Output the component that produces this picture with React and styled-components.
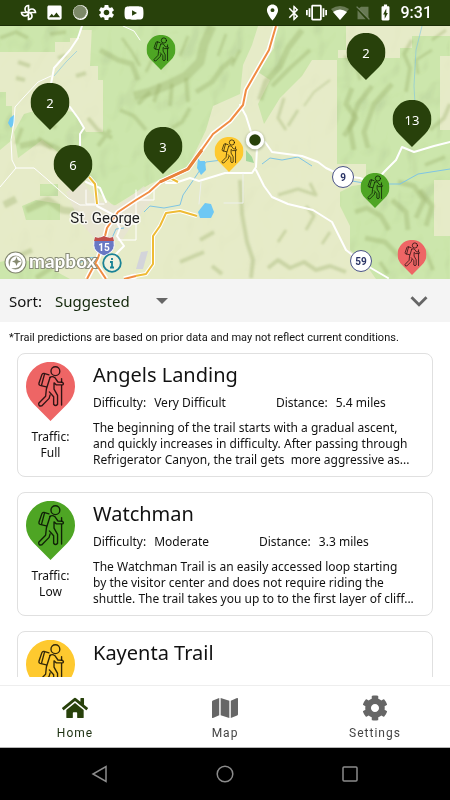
import React, { useState } from 'react'
import styled, { createGlobalStyle } from 'styled-components'
import { FaHome, FaMap, FaCog, FaYoutube } from 'react-icons/fa'
import {
    MdImage,
    MdSettings,
    MdLocationOn,
    MdBluetooth,
    MdVibration,
    MdBatteryChargingFull,
    MdExpandMore,
} from 'react-icons/md'

const colors = {
    forest: '#28410b',
    full: '#ee6565',
    low: '#4ea524',
    medium: '#fec92f',
    icon: '#666666',
}

const GlobalStyle = createGlobalStyle`
    * {
        box-sizing: border-box;
    }
    body {
        margin: 0;
        background: white;
        color: #111111;
        font-family: 'Noto Sans', sans-serif;
    }
    button {
        padding: 0;
        border: none;
        background: none;
        font: inherit;
        color: inherit;
        cursor: pointer;
    }
    svg {
        display: block;
    }
`

const Screen = styled.div`
    display: flex;
    flex-direction: column;
    height: 100vh;
    overflow: hidden;
`

const StatusBar = styled.header`
    display: flex;
    flex: none;
    align-items: center;
    justify-content: space-between;
    height: 26px;
    padding: 0 18px 0 20px;
    border-bottom: 1px solid #1c2e07;
    background: ${colors.forest};
    color: white;
`

const StatusGroup = styled.div`
    display: flex;
    align-items: center;
    gap: ${props => props.$gap}px;
`

const Clock = styled.time`
    margin-left: 3px;
    font-family: Roboto, sans-serif;
    font-size: 16px;
    font-weight: 500;
    line-height: 20px;
`

const MapArea = styled.section`
    position: relative;
    flex: none;
    width: 100%;
    aspect-ratio: 450 / 253;
    overflow: hidden;
`

const MapCanvas = styled.svg`
    width: 100%;
    height: 100%;
`

const MapPin = styled.button`
    position: absolute;
    left: calc(${props => props.$x} / 450 * 100%);
    top: calc(${props => props.$y} / 253 * 100%);
    width: ${props => props.$size}px;
    transform: translate(-50%, -100%);
`

const PinCount = styled.span`
    position: absolute;
    top: 10px;
    left: 0;
    width: 100%;
    color: white;
    font-size: 13px;
    line-height: 20px;
    text-align: center;
`

const MapCredit = styled.div`
    position: absolute;
    left: 4px;
    bottom: 5px;
    display: flex;
    align-items: center;
    gap: 2px;
`

const InfoLink = styled.a`
    display: block;
    margin-left: 2px;
`

const Wordmark = styled.svg`
    width: 69px;
    height: 22px;
    overflow: visible;
`

const SortBar = styled.div`
    display: flex;
    flex: none;
    align-items: center;
    height: 43px;
    padding: 0 14px 0 9px;
    background: #f4f4f4;
    font-size: 15px;
`

const SortLabel = styled.label`
    margin-right: 13px;
`

const SortSelect = styled.select`
    width: 101px;
    padding: 0;
    border: none;
    background: none;
    appearance: none;
    color: #12270a;
    font: inherit;
`

const SortArrow = styled.svg`
    width: 12px;
    height: 6px;
    pointer-events: none;
`

const CollapseButton = styled.button`
    margin-left: auto;
    color: ${colors.icon};
`

const TrailList = styled.main`
    display: flex;
    flex: 1;
    flex-direction: column;
    min-height: 0;
    margin-bottom: 8px;
    padding: 8px 17px 0;
    overflow: hidden;
`

const Note = styled.p`
    flex: none;
    margin: 0 0 7px -8px;
    font-family: Roboto, sans-serif;
    font-size: 11px;
    line-height: 16px;
`

const Card = styled.article`
    display: flex;
    flex: none;
    gap: 18px;
    min-height: 124px;
    margin-bottom: 15px;
    padding: 8px 16px 8px 8px;
    border: 1px solid #e0e0e0;
    border-radius: 8px;
`

const Traffic = styled.div`
    display: flex;
    flex: none;
    flex-direction: column;
    align-items: center;
    width: 49px;
    font-size: 12px;
    line-height: 16px;
    text-align: center;
`

const TrafficText = styled.p`
    margin: 8px 0 0;
`

const Details = styled.div`
    flex: 1;
    min-width: 0;
    font-size: 12px;
    line-height: 16px;
`

const TrailName = styled.h2`
    margin: 0;
    font-size: 20px;
    font-weight: 400;
    line-height: 26px;
`

const Facts = styled.dl`
    display: flex;
    gap: 50px;
    margin: 7px 0 9px;
`

const Fact = styled.div`
    display: flex;
    gap: 8px;

    dd {
        margin: 0;
    }
`

const Description = styled.p`
    margin: 0;
    white-space: pre-wrap;
`

const TabBar = styled.nav`
    display: flex;
    flex: none;
    height: 63px;
    border-top: 1px solid #eeeeee;
    border-bottom: 1px solid #b5b5b5;
`

const Tab = styled.button`
    display: flex;
    flex: 1;
    flex-direction: column;
    align-items: center;
    gap: 4px;
    padding-top: 9px;
    color: ${props => (props.$active ? colors.forest : colors.icon)};
`

const TabLabel = styled.span`
    color: ${props => (props.$active ? '#1c3010' : '#444444')};
    font-family: Roboto, sans-serif;
    font-size: 12px;
    line-height: 16px;
    letter-spacing: 1px;
`

const SystemBar = styled.footer`
    display: flex;
    flex: none;
    height: 52px;
    padding: 0 38px;
    background: black;
`

const SystemButton = styled.button`
    display: flex;
    flex: 1;
    align-items: center;
    justify-content: center;
`

const trails = [
    {
        name: 'Angels Landing',
        traffic: 'Full',
        color: colors.full,
        difficulty: 'Very Difficult',
        distance: '5.4 miles',
        description:
            'The beginning of the trail starts with a gradual ascent, and quickly increases in difficulty. After passing through Refrigerator Canyon, the trail gets  more aggressive as...',
    },
    {
        name: 'Watchman',
        traffic: 'Low',
        color: colors.low,
        difficulty: 'Moderate',
        distance: '3.3 miles',
        description:
            'The Watchman Trail is an easily accessed loop starting\nby the visitor center and does not require riding the\nshuttle. The trail takes you up to to the first layer of cliff...',
    },
    {
        name: 'Kayenta Trail',
        color: colors.medium,
    },
]

const clusters = [
    { x: 366, y: 54, count: 2 },
    { x: 50, y: 104, count: 2 },
    { x: 412, y: 121, count: 13 },
    { x: 163, y: 148, count: 3 },
    { x: 73, y: 166, count: 6 },
]

const trailPins = [
    { x: 161, y: 44, color: colors.low, label: 'Low traffic trail' },
    { x: 229, y: 146, color: colors.medium, label: 'Medium traffic trail' },
    { x: 375, y: 182, color: colors.low, label: 'Low traffic trail' },
    { x: 412, y: 249, color: colors.full, label: 'Full trail' },
]

// hillsides: [path, width]
const ridges = [
    ['M212 26l-8 18-4 18-14 14-16 8-20 8-16 4', 9],
    ['M100 50l18 10 14 4 6 16', 5],
    ['M122 38l10 14 8 14', 3],
    ['M160 84l-6 18M172 84l-2 22M186 78l2 24M150 92l-12 12', 4],
    ['M196 92l16-10 10-14 12-10', 5],
    ['M120 110l14 6 12 14M190 108l-8 14-10 6', 4],
    ['M88 118l10 12 14 8M110 130l-12 16', 4],
    ['M188 36l-8 20M226 34l-8 22M240 50l-8 16M146 72l8-16', 3],
    ['M302 30l-14 18-8 18-14 16-6 18', 6],
    ['M310 50l-20 18-18 18', 4],
    ['M284 98l-6 20 8 12M298 110l-10 16', 3],
    ['M330 80l-16 12-10 14', 2],
    ['M352 88l-6 16 10 14-12 18', 5],
    ['M372 86l-14 18-8 24 4 22', 5],
    ['M392 84l-18 20-10 28 4 16', 5],
    ['M344 56l12 10 4 14', 3],
    ['M412 40l-8 14 6 14-4 24', 4],
    ['M432 50l-16 10 2 14M446 30l-14 10', 3],
    ['M430 130l14-12 6-14M425 165l20-8', 4],
    ['M398 182l16 4 10 14-8 18', 5],
    ['M420 190l12 16-6 20M392 200l14 12 2 18', 5],
    ['M355 212l12-4 14 8 8 14M365 238l20 4 14 14', 5],
    ['M380 262l8 12M425 250l8 20', 4],
    ['M240 180l2 34 5 28 6 18-2 18', 4],
    ['M268 268l10-8 12 8 14-6 12 8 14-4 16 6', 4],
    ['M278 195l20-6 18 6-6-12', 3],
    ['M306 230l8-14-8-10M286 230l-8 12M330 232l-8 12', 3],
    ['M26 210l22-10 14 10 16 2M4 205l12-6', 7],
    ['M20 146l20-4 16 6 10 6', 6],
    ['M44 116l12 12M22 128l-6 16M38 138l14 10', 4],
    ['M200 240l14-8M180 262l24-10M212 266l10 8', 4],
    ['M18 62l12 4M76 76l10-3M58 58l8-3M16 78l9 2', 4],
    ['M0 38l16-6 12 6M50 34l16-2', 4],
    ['M6 262l26-12M36 278l18-12', 5],
]

function HikerPin({ size, color, hiker = true }) {
    return (
        <svg width={size} height={Math.round(size * 1.2)} viewBox="0 0 50 60" aria-hidden="true">
            <path d="M25 60L8 43A25 25 0 1 1 42 43Z" fill={color} />
            {hiker && (
                <g fill="none" stroke="#000" strokeOpacity="0.8" strokeWidth="1.4" strokeLinejoin="round" strokeLinecap="round">
                    <circle cx="30" cy="9.3" r="4.5" />
                    <path d="M23.4 13L18.4 11.5Q16.8 11.200 16.2 12.800L13.2 21.6Q12.800 23.300 14.400 23.800L20.600 25.200M19 11.800L15.800 23.800" />
                    <path d="M24.600 15.500Q27 13.900 29.500 15.900L32.600 20.300L37 20.600Q39.200 21.800 37.400 23.300L30.800 23.200L28.600 21.200V27.500L32.200 34V43Q30.200 45.600 28.200 43V35.400L23.800 30.400" />
                    <path d="M24.600 15.500L20.800 27.500L20 34.800L13 42Q12.700 45.500 16 44.700L23.600 37L24.600 33.500" />
                    <path d="M36.300 16.800V20M36.300 24V43.800" />
                </g>
            )}
        </svg>
    )
}

function Terrain() {
    return (
        <MapCanvas viewBox="0 26 450 253" preserveAspectRatio="none" role="img" aria-label="Trail map">
            <defs>
                <filter id="relief" x="0" y="0" width="100%" height="100%">
                    <feTurbulence type="fractalNoise" baseFrequency="0.04 0.03" numOctaves="2" seed="8" result="noise" />
                    <feDiffuseLighting in="noise" surfaceScale="7" diffuseConstant="1.15" lightingColor="#ffffff" result="lit">
                        <feDistantLight azimuth="225" elevation="60" />
                    </feDiffuseLighting>
                    <feColorMatrix type="matrix" values="1 0 0 0 0.02  0 1 0 0 0.03  0 0 0.9 0 0  0 0 0 1 0" />
                </filter>
                <filter id="soft">
                    <feGaussianBlur stdDeviation="1" />
                </filter>
                <clipPath id="forest">
                    <path d="M0 26H92V30H80V38H70V42H55V52H0Z" />
                    <path d="M92 26H258L252 45L243 65L240 94L213 106L206 130L188 167L150 184L127 198L114 206L100 194L86 176L78 166L58 152L42 140L18 158L14 132L24 114L44 108L74 112L86 132H103V80H98V66H90Z" />
                    <path d="M276 26H346V50H338V60H312L302 76L280 98L264 124L258 104L270 80L258 72L274 48Z" />
                    <path d="M337 58H400V48H412V36H450V56H440V130H450V180H434V236H450V279H376L364 262L350 250V226L340 206V192L352 186L366 184V164H337Z" />
                    <path d="M0 92H6V106H12V140L0 150ZM40 184H58V196H40ZM22 206L36 200L60 204L60 220H26ZM0 262L18 258L46 266L70 279H0Z" />
                </clipPath>
            </defs>
            <rect y="26" width="450" height="253" fill="#e6ebc8" />
            <rect y="26" width="450" height="253" fill="#cce6ae" clipPath="url(#forest)" />
            <g style={{ mixBlendMode: 'multiply' }} opacity="0.06">
                <rect y="26" width="450" height="253" filter="url(#relief)" />
            </g>
            <g style={{ mixBlendMode: 'multiply' }} opacity="0.22" clipPath="url(#forest)">
                <rect y="26" width="450" height="253" filter="url(#relief)" />
            </g>
            <g fill="none" stroke="#96a963" strokeOpacity="0.34" strokeLinejoin="round" filter="url(#soft)">
                {ridges.map(([d, width]) => (
                    <path key={d} d={d} strokeWidth={width} />
                ))}
            </g>
            <path d="M66 192L84 183L96 200L118 206L144 186L152 200L134 222L122 240L96 240L80 222Z" fill="#e8e3d5" opacity="0.7" />
            <path d="M141 252L148 251L143 269L136 269Z" fill="#d3d4da" />
            <g fill="none" stroke="#7fc5e4" strokeLinejoin="round">
                <path d="M112 238L116 229L124 228M144 212L150 206L164 208L180 205L183 195L192 182L200 170L206 162L222 160" />
                <path d="M262 164L270 158L282 160L298 157L312 166M352 181L370 184L400 184L418 174L450 169" />
                <path d="M422 26L416 50L414 86L415 104M77 51L66 62L54 76" strokeOpacity="0.6" />
                <path d="M76 265L88 258L98 257" />
            </g>
            <path d="M246 150L252 157L254 163L246 161Z" fill="#a4d79c" />
            <g fill="#6ec8f4">
                <path d="M198 158L200 161L205 161L206 170L201 175L197 168ZM201 208L205 203L211 204L214 212L211 218L200 218L198 212ZM10 118L15 114L14 124L11 128L8 123Z" />
            </g>
            <g fill="none" stroke="#fff" strokeWidth="2" strokeLinejoin="round" strokeLinecap="round">
                <path d="M82 26L78 38L70 50L54 68L51 84V104M70 107L78 118L84 128L80 134V150" />
                <path d="M51 76L38 82L24 97L15 107L14 122L11 140L12 160L16 168L0 187M16 168L34 168L48 180L68 198L80 205L97 205" strokeWidth="1" />
                <path d="M86 182L100 188L106 202M97 206L112 214L120 228L117 236L124 246L108 262" />
                <path d="M123 26L134 31L140 40" strokeWidth="1" />
                <path d="M240 105L246 116L252 135M257 148L256 167L252 173L225 173L199 181L190 178L175 183L166 183" />
                <path d="M265 142L272 152L302 156L318 162L326 168L343 176L360 178L374 184L384 172L396 160L402 147L414 152L434 146L450 142" />
                <path d="M256 170L264 186L272 197L288 204L313 210L332 222L346 250L364 264L388 278" />
                <path d="M224 203H243V174M201 182L199 204" strokeWidth="1" stroke="#edf0ec" />
                <path d="M136 190V240H118M154 190V200H136M122 224H136M86 190V204H104" strokeWidth="1" />
            </g>
            <g fill="none" strokeLinejoin="round">
                <path d="M89 177L95 184L97 204M170 178L178 182M197 216L180 211L166 213L160 226L153 236V264L146 274L130 277" stroke="#fff" strokeWidth="4" />
                <path d="M89 177L95 184L97 204M170 178L178 182M197 216L180 211L166 213L160 226L153 236V264L146 274L130 277" stroke="#eebb35" strokeWidth="2" />
                <path d="M276 26L269 50L246 90L243 105L230 121L213 134L196 158L188 169L160 182L149 192L136 200L118 212L107 228L104 240L98 258L87 279M96 264L106 279M124 279L136 276" stroke="#fff" strokeWidth="5" />
                <path d="M276 26L269 50L246 90L243 105L230 121L213 134L196 158L188 169L160 182L149 192L136 200L118 212L107 228L104 240L98 258L87 279M96 264L106 279M124 279L136 276" stroke="#f08c42" strokeWidth="2" />
                <path d="M202 150L196 158L188 169L160 182" stroke="#e8823a" strokeWidth="3" />
            </g>
            <g>
                <path d="M95 237Q99 239 104 236Q109 239 113 237Q116 247 112 251Q109 254 104 256Q99 254 96 251Q92 247 95 237Z" fill="#6878c4" stroke="#fff" />
                <path d="M95 237Q99 239 104 236Q109 239 113 237L114 241H94Z" fill="#c14d4b" />
                <text x="104" y="251" fill="#fff" fontFamily="Roboto, sans-serif" fontSize="10" fontWeight="700" textAnchor="middle">15</text>
            </g>
            <g fill="#fff" stroke="#4a5387" strokeWidth="1">
                <circle cx="343" cy="177" r="10.5" />
                <circle cx="361" cy="261" r="10.5" />
            </g>
            <g fill="#293365" fontFamily="Roboto, sans-serif" fontSize="10" fontWeight="700" textAnchor="middle">
                <text x="343" y="181">9</text>
                <text x="361" y="265">59</text>
            </g>
            <text x="105" y="223" textAnchor="middle" fontFamily="Roboto, sans-serif" fontSize="15" fill="#222" stroke="#fff" strokeWidth="3" strokeOpacity="0.7" paintOrder="stroke">
                St. George
            </text>
            <circle cx="255" cy="141" r="10" fill="#7d8a66" opacity="0.5" filter="url(#soft)" />
            <circle cx="255" cy="140" r="7.500" fill={colors.forest} stroke="#fff" strokeWidth="3.500" />
        </MapCanvas>
    )
}

function MapboxCredit() {
    return (
        <MapCredit>
            <svg width="23" height="23" viewBox="0 0 23 23" aria-hidden="true">
                <circle cx="11.5" cy="11.5" r="9.5" fill="#8c8f7b" stroke="#81856e" strokeWidth="3" />
                <circle cx="11.5" cy="11.5" r="8.5" fill="#8c8f7b" stroke="#fff" strokeWidth="3" />
                <path d="M6 17Q5 9 9 6.5Q13 4 16 7Q19 10 16.500 14Q14 18 6 17Z" fill="#fff" />
                <path d="M12.500 6L13.800 9.200L17 10.500L13.800 11.800L12.500 15L11.200 11.800L8 10.500L11.200 9.200Z" fill="#85896f" />
            </svg>
            <Wordmark>
                <text x="0" y="16" fontFamily="Lato, sans-serif" fontSize="19" fontWeight="700" fill="#fff" stroke="#888c78" strokeWidth="2" paintOrder="stroke">
                    mapbox
                </text>
            </Wordmark>
            <InfoLink href="#attribution" aria-label="Map attribution">
                <svg width="20" height="20" viewBox="0 0 20 20">
                    <circle cx="10" cy="10" r="8.800" fill="#f0f2e0" fillOpacity="0.9" stroke="#198296" strokeWidth="1.800" />
                    <path d="M10 5V7M8 9H10V14M8 14.500H12" fill="none" stroke="#198296" strokeWidth="1.800" />
                </svg>
            </InfoLink>
        </MapCredit>
    )
}

function TrailCard({ trail }) {
    return (
        <Card>
            <Traffic>
                <HikerPin size={49} color={trail.color} />
                {trail.traffic && (
                    <TrafficText>
                        Traffic:
                        <br />
                        {trail.traffic}
                    </TrafficText>
                )}
            </Traffic>
            <Details>
                <TrailName>{trail.name}</TrailName>
                {trail.difficulty && (
                    <Facts>
                        <Fact>
                            <dt>Difficulty:</dt>
                            <dd>{trail.difficulty}</dd>
                        </Fact>
                        <Fact>
                            <dt>Distance:</dt>
                            <dd>{trail.distance}</dd>
                        </Fact>
                    </Facts>
                )}
                {trail.description && <Description>{trail.description}</Description>}
            </Details>
        </Card>
    )
}

function PhoneStatus() {
    return (
        <StatusBar>
            <StatusGroup $gap={8}>
                <svg width="17" height="17" viewBox="0 0 17 17" fill="none" stroke="#fff" strokeWidth="1.700">
                    <path d="M8.500 8.500V1.500A3.500 3.500 0 0 0 5 5A3.500 3.500 0 0 0 8.500 8.500H15.500A3.500 3.500 0 0 0 12 5A3.500 3.500 0 0 0 8.500 8.500V15.500A3.500 3.500 0 0 0 12 12A3.500 3.500 0 0 0 8.500 8.500H1.500A3.500 3.500 0 0 0 5 12A3.500 3.500 0 0 0 8.500 8.500" />
                </svg>
                <MdImage size={19} />
                <svg width="17" height="17" viewBox="0 0 17 17">
                    <circle cx="8.500" cy="8.500" r="7.500" fill="#fff" />
                    <circle cx="8" cy="8" r="6.500" fill="#7c8968" stroke="#a4ae93" strokeDasharray="1 1" />
                </svg>
                <MdSettings size={19} />
                <FaYoutube size={20} />
            </StatusGroup>
            <StatusGroup $gap={3}>
                <MdLocationOn size={19} />
                <MdBluetooth size={18} />
                <MdVibration size={21} />
                <svg width="20" height="14" viewBox="0 0 20 14">
                    <path d="M1 3Q10 -3 19 3L10 14Z" fill="#fff" fillOpacity="0.300" />
                    <path d="M3 6Q10 1 17 6L10 14Z" fill="#fff" />
                </svg>
                <svg width="20" height="16" viewBox="0 0 22 16">
                    <path d="M9 1H17V14L6 3ZM5 5L14 15H5Z" fill="#fff" fillOpacity="0.300" />
                    <path d="M4 1L18 15" stroke="#718062" strokeWidth="1.500" />
                </svg>
                <MdBatteryChargingFull size={19} />
                <Clock>9:31</Clock>
            </StatusGroup>
        </StatusBar>
    )
}

export default function App() {
    const [sort, setSort] = useState('suggested')
    const [tab, setTab] = useState('Home')

    const tabs = [
        { name: 'Home', icon: <FaHome size={26} /> },
        { name: 'Map', icon: <FaMap size={26} /> },
        { name: 'Settings', icon: <FaCog size={26} /> },
    ]

    return (
        <Screen>
            <GlobalStyle />
            <PhoneStatus />
            <MapArea>
                <Terrain />
                {clusters.map(({ x, y, count }) => (
                    <MapPin key={`${x}-${y}`} $x={x} $y={y} $size={39}>
                        <HikerPin size={39} color={colors.forest} hiker={false} />
                        <PinCount>{count}</PinCount>
                    </MapPin>
                ))}
                {trailPins.map(({ x, y, color, label }) => (
                    <MapPin key={`${x}-${y}`} $x={x} $y={y} $size={29} aria-label={label}>
                        <HikerPin size={29} color={color} />
                    </MapPin>
                ))}
                <MapboxCredit />
            </MapArea>
            <SortBar>
                <SortLabel htmlFor="sort">Sort:</SortLabel>
                <SortSelect id="sort" value={sort} onChange={e => setSort(e.target.value)}>
                    <option value="suggested">Suggested</option>
                    <option value="distance">Distance</option>
                    <option value="difficulty">Difficulty</option>
                </SortSelect>
                <SortArrow viewBox="0 0 12 6" aria-hidden="true">
                    <path d="M0 0H12L6 6Z" fill={colors.icon} />
                </SortArrow>
                <CollapseButton aria-label="Collapse map">
                    <MdExpandMore size={34} />
                </CollapseButton>
            </SortBar>
            <TrailList>
                <Note>*Trail predictions are based on prior data and may not reflect current conditions.</Note>
                {trails.map(trail => (
                    <TrailCard key={trail.name} trail={trail} />
                ))}
            </TrailList>
            <TabBar>
                {tabs.map(({ name, icon }) => (
                    <Tab key={name} $active={tab === name} onClick={() => setTab(name)}>
                        {icon}
                        <TabLabel $active={tab === name}>{name}</TabLabel>
                    </Tab>
                ))}
            </TabBar>
            <SystemBar>
                <SystemButton aria-label="Back">
                    <svg width="18" height="18" viewBox="0 0 18 18">
                        <path d="M15 1.500V16.500L2 9Z" fill="none" stroke="#8c8c8c" strokeWidth="1.500" />
                    </svg>
                </SystemButton>
                <SystemButton aria-label="Home screen">
                    <svg width="18" height="18" viewBox="0 0 18 18">
                        <circle cx="9" cy="9" r="7.800" fill="none" stroke="#8c8c8c" strokeWidth="1.500" />
                    </svg>
                </SystemButton>
                <SystemButton aria-label="Recent apps">
                    <svg width="18" height="18" viewBox="0 0 18 18">
                        <rect x="2" y="2" width="14" height="14" rx="1" fill="none" stroke="#8c8c8c" strokeWidth="1.500" />
                    </svg>
                </SystemButton>
            </SystemBar>
        </Screen>
    )
}
